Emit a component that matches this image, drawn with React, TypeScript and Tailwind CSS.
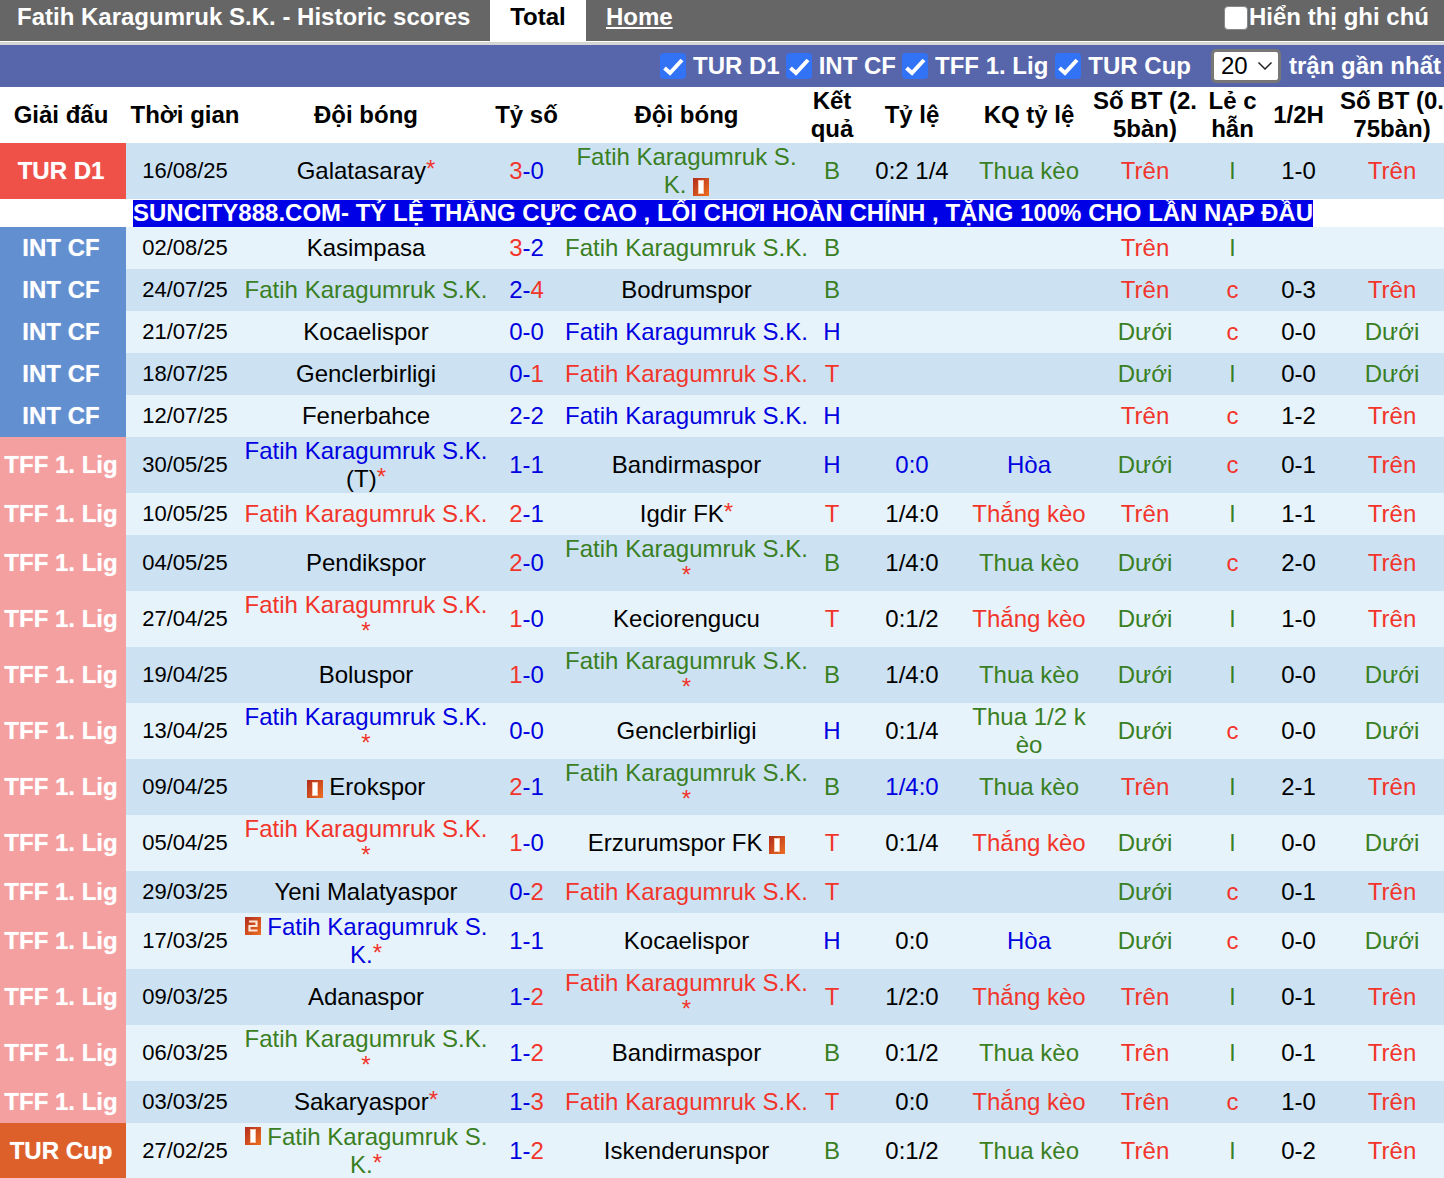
type Tone = "k" | "g" | "r" | "b";
type IconKind = "one" | "two";

interface Team {
  name: string;
  tone: Tone;
  before?: IconKind;
  after?: IconKind;
  lift?: boolean;
  tag?: string;
}

interface Row {
  league: "TUR D1" | "INT CF" | "TFF 1. Lig" | "TUR Cup";
  date: string;
  home: Team;
  score: [string, Tone, string, Tone];
  away: Team;
  result: string;
  odds?: string;
  oddsBlue?: boolean;
  oddsResult?: string;
  goals: string;
  oddEven: string;
  half?: string;
  goalsHalf?: string;
  tall?: boolean;
}

const toneClass: Record<Tone, string> = {
  k: "text-black",
  g: "text-[#3a7f23]",
  r: "text-[#f2352b]",
  b: "text-[#0000e0]",
};

const leagueClass = {
  "TUR D1": "bg-[#ef5047]",
  "INT CF": "bg-[#618fd0]",
  "TFF 1. Lig": "bg-[#f4a0a0]",
  "TUR Cup": "bg-[#dd5f2a]",
};

const FK = "Fatih Karagumruk S.K.";
const team = (name: string, tone: Tone = "k", extra: Partial<Team> = {}): Team => ({ name, tone, ...extra });

const rows: Row[] = [
  { league: "TUR D1", date: "16/08/25", home: team("Galatasaray*"), score: ["3", "r", "0", "b"], away: team("Fatih Karagumruk S.\nK. ", "g", { after: "one" }), result: "B", odds: "0:2 1/4", oddsResult: "Thua kèo", goals: "Trên", oddEven: "l", half: "1-0", goalsHalf: "Trên", tall: true },
  { league: "INT CF", date: "02/08/25", home: team("Kasimpasa"), score: ["3", "r", "2", "b"], away: team(FK, "g"), result: "B", goals: "Trên", oddEven: "l" },
  { league: "INT CF", date: "24/07/25", home: team(FK, "g"), score: ["2", "b", "4", "r"], away: team("Bodrumspor"), result: "B", goals: "Trên", oddEven: "c", half: "0-3", goalsHalf: "Trên" },
  { league: "INT CF", date: "21/07/25", home: team("Kocaelispor"), score: ["0", "b", "0", "b"], away: team(FK, "b"), result: "H", goals: "Dưới", oddEven: "c", half: "0-0", goalsHalf: "Dưới" },
  { league: "INT CF", date: "18/07/25", home: team("Genclerbirligi"), score: ["0", "b", "1", "r"], away: team(FK, "r"), result: "T", goals: "Dưới", oddEven: "l", half: "0-0", goalsHalf: "Dưới" },
  { league: "INT CF", date: "12/07/25", home: team("Fenerbahce"), score: ["2", "b", "2", "b"], away: team(FK, "b"), result: "H", goals: "Trên", oddEven: "c", half: "1-2", goalsHalf: "Trên" },
  { league: "TFF 1. Lig", date: "30/05/25", home: team(FK + "\n", "b", { tag: "(T)" }), score: ["1", "b", "1", "b"], away: team("Bandirmaspor"), result: "H", odds: "0:0", oddsBlue: true, oddsResult: "Hòa", goals: "Dưới", oddEven: "c", half: "0-1", goalsHalf: "Trên", tall: true },
  { league: "TFF 1. Lig", date: "10/05/25", home: team(FK, "r"), score: ["2", "r", "1", "b"], away: team("Igdir FK*"), result: "T", odds: "1/4:0", oddsResult: "Thắng kèo", goals: "Trên", oddEven: "l", half: "1-1", goalsHalf: "Trên" },
  { league: "TFF 1. Lig", date: "04/05/25", home: team("Pendikspor"), score: ["2", "r", "0", "b"], away: team(FK + "\n*", "g"), result: "B", odds: "1/4:0", oddsResult: "Thua kèo", goals: "Dưới", oddEven: "c", half: "2-0", goalsHalf: "Trên", tall: true },
  { league: "TFF 1. Lig", date: "27/04/25", home: team(FK + "\n*", "r"), score: ["1", "r", "0", "b"], away: team("Keciorengucu"), result: "T", odds: "0:1/2", oddsResult: "Thắng kèo", goals: "Dưới", oddEven: "l", half: "1-0", goalsHalf: "Trên", tall: true },
  { league: "TFF 1. Lig", date: "19/04/25", home: team("Boluspor"), score: ["1", "r", "0", "b"], away: team(FK + "\n*", "g"), result: "B", odds: "1/4:0", oddsResult: "Thua kèo", goals: "Dưới", oddEven: "l", half: "0-0", goalsHalf: "Dưới", tall: true },
  { league: "TFF 1. Lig", date: "13/04/25", home: team(FK + "\n*", "b"), score: ["0", "b", "0", "b"], away: team("Genclerbirligi"), result: "H", odds: "0:1/4", oddsResult: "Thua 1/2 k\nèo", goals: "Dưới", oddEven: "c", half: "0-0", goalsHalf: "Dưới", tall: true },
  { league: "TFF 1. Lig", date: "09/04/25", home: team("Erokspor", "k", { before: "one" }), score: ["2", "r", "1", "b"], away: team(FK + "\n*", "g"), result: "B", odds: "1/4:0", oddsBlue: true, oddsResult: "Thua kèo", goals: "Trên", oddEven: "l", half: "2-1", goalsHalf: "Trên", tall: true },
  { league: "TFF 1. Lig", date: "05/04/25", home: team(FK + "\n*", "r"), score: ["1", "r", "0", "b"], away: team("Erzurumspor FK ", "k", { after: "one" }), result: "T", odds: "0:1/4", oddsResult: "Thắng kèo", goals: "Dưới", oddEven: "l", half: "0-0", goalsHalf: "Dưới", tall: true },
  { league: "TFF 1. Lig", date: "29/03/25", home: team("Yeni Malatyaspor"), score: ["0", "b", "2", "r"], away: team(FK, "r"), result: "T", goals: "Dưới", oddEven: "c", half: "0-1", goalsHalf: "Trên" },
  { league: "TFF 1. Lig", date: "17/03/25", home: team("Fatih Karagumruk S.\nK.*", "b", { before: "two", lift: true }), score: ["1", "b", "1", "b"], away: team("Kocaelispor"), result: "H", odds: "0:0", oddsResult: "Hòa", goals: "Dưới", oddEven: "c", half: "0-0", goalsHalf: "Dưới", tall: true },
  { league: "TFF 1. Lig", date: "09/03/25", home: team("Adanaspor"), score: ["1", "b", "2", "r"], away: team(FK + "\n*", "r"), result: "T", odds: "1/2:0", oddsResult: "Thắng kèo", goals: "Trên", oddEven: "l", half: "0-1", goalsHalf: "Trên", tall: true },
  { league: "TFF 1. Lig", date: "06/03/25", home: team(FK + "\n*", "g"), score: ["1", "b", "2", "r"], away: team("Bandirmaspor"), result: "B", odds: "0:1/2", oddsResult: "Thua kèo", goals: "Trên", oddEven: "l", half: "0-1", goalsHalf: "Trên", tall: true },
  { league: "TFF 1. Lig", date: "03/03/25", home: team("Sakaryaspor*"), score: ["1", "b", "3", "r"], away: team(FK, "r"), result: "T", odds: "0:0", oddsResult: "Thắng kèo", goals: "Trên", oddEven: "c", half: "1-0", goalsHalf: "Trên" },
  { league: "TUR Cup", date: "27/02/25", home: team("Fatih Karagumruk S.\nK.*", "g", { before: "one", lift: true }), score: ["1", "b", "2", "r"], away: team("Iskenderunspor"), result: "B", odds: "0:1/2", oddsResult: "Thua kèo", goals: "Trên", oddEven: "l", half: "0-2", goalsHalf: "Trên", tall: true },
];

const headers = ["Giải đấu", "Thời gian", "Đội bóng", "Tỷ số", "Đội bóng", "Kết\nquả", "Tỷ lệ", "KQ tỷ lệ", "Số BT (2.\n5bàn)", "Lẻ c\nhẫn", "1/2H", "Số BT (0.\n75bàn)"];
const widths = ["w-[126px]", "w-[118px]", "w-[244px]", "w-[77px]", "w-[243px]", "w-[48px]", "w-[112px]", "w-[122px]", "w-[110px]", "w-[65px]", "w-[67px]", "w-[120px]"];

function CardIcon({ kind, lift }: { kind: IconKind; lift?: boolean }) {
  const id = `card-${kind}`;
  return (
    <svg viewBox="0 0 16 18" className={`inline-block h-[18px] w-4 ${lift ? "-translate-y-[3px]" : ""}`}>
      <defs>
        <linearGradient id={id} x1="0" y1="0" x2="1" y2="1">
          <stop offset="0" stopColor="#b02c1e" />
          <stop offset="1" stopColor="#ee6f20" />
        </linearGradient>
      </defs>
      <rect width="16" height="18" fill={`url(#${id})`} />
      {kind === "one" ? (
        <>
          <rect x="5" y="2" width="6" height="14" fill="#f7c4a8" />
          <rect x="6" y="3" width="4" height="12" fill="#fff" />
        </>
      ) : (
        <path d="M4 4.5h7.5v4.5h-7v4.5h8" fill="none" stroke="#fbe6d8" strokeWidth="2.2" />
      )}
    </svg>
  );
}

function Star() {
  return <span className="relative -top-0.5 text-[#f2352b]">*</span>;
}

function Stars({ text }: { text: string }) {
  const parts = text.split("*");
  return (
    <>
      {parts.map((part, i) => (
        <span key={i}>
          {part}
          {i < parts.length - 1 ? <Star /> : null}
        </span>
      ))}
    </>
  );
}

function TeamCell({ team }: { team: Team }) {
  return (
    <td className={`whitespace-pre-line p-0 text-center ${toneClass[team.tone]}`}>
      {team.before ? (
        <>
          <CardIcon kind={team.before} lift={team.lift} />{" "}
        </>
      ) : null}
      <Stars text={team.name} />
      {team.tag ? (
        <>
          <span className="text-black">{team.tag}</span>
          <Star />
        </>
      ) : null}
      {team.after ? <CardIcon kind={team.after} /> : null}
    </td>
  );
}

function CheckBox() {
  return (
    <span className="flex size-[26px] items-center justify-center rounded-[4px] bg-[#3273f6]">
      <svg viewBox="0 0 26 26" className="size-[26px]">
        <path d="M4.5 15l5.5 5L22 7" fill="none" stroke="#fff" strokeWidth="4" />
      </svg>
    </span>
  );
}

function FilterItem({ label, className }: { label: string; className?: string }) {
  return (
    <span className={`flex items-center gap-[7px] ${className ?? ""}`}>
      <CheckBox />
      <span>{label}</span>
    </span>
  );
}

function MatchRow({ row, index }: { row: Row; index: number }) {
  const bg = index % 2 === 0 ? "bg-[#cce2f3]" : "bg-[#e7f3fa]";
  const resultTone: Tone = row.result === "B" ? "g" : row.result === "T" ? "r" : "b";
  const oddsTone: Tone | undefined = row.oddsResult?.startsWith("Thua") ? "g" : row.oddsResult === "Hòa" ? "b" : "r";
  const goalsTone = (v?: string): Tone => (v === "Trên" ? "r" : "g");

  return (
    <tr className={`${bg} ${row.tall ? "h-14" : "h-[42px]"}`}>
      <td className={`p-0 pr-1 text-center font-bold text-white [text-shadow:0_0_1px_rgba(255,255,255,0.6)] ${leagueClass[row.league]}`}>{row.league}</td>
      <td className="p-0 text-center text-[22px]">{row.date}</td>
      <TeamCell team={row.home} />
      <td className="p-0 text-center">
        <span className={toneClass[row.score[1]]}>{row.score[0]}</span>
        <span className={toneClass.b}>-</span>
        <span className={toneClass[row.score[3]]}>{row.score[2]}</span>
      </td>
      <TeamCell team={row.away} />
      <td className={`p-0 text-center ${toneClass[resultTone]}`}>{row.result}</td>
      <td className={`p-0 text-center ${row.oddsBlue ? toneClass.b : ""}`}>{row.odds}</td>
      <td className={`whitespace-pre-line p-0 text-center ${oddsTone ? toneClass[oddsTone] : ""}`}>{row.oddsResult}</td>
      <td className={`p-0 text-center ${toneClass[goalsTone(row.goals)]}`}>{row.goals}</td>
      <td className={`p-0 text-center ${row.oddEven === "c" ? toneClass.r : toneClass.g}`}>{row.oddEven}</td>
      <td className="p-0 text-center">{row.half}</td>
      <td className={`p-0 text-center ${toneClass[goalsTone(row.goalsHalf)]}`}>{row.goalsHalf}</td>
    </tr>
  );
}

export default function App() {
  return (
    <div className="h-[1178px] w-[1444px] overflow-hidden bg-white font-['Liberation_Sans',Arial,sans-serif] text-2xl leading-7 text-black">
      <div className="flex h-[41px] items-start bg-[#666666] font-bold text-white">
        <span className="ml-[17px] mt-[3px] w-[473px]">Fatih Karagumruk S.K. - Historic scores</span>
        <span className="flex h-[41px] w-24 justify-center bg-white pt-[3px] text-black">Total</span>
        <span className="ml-5 mt-[3px] underline">Home</span>
        <span className="ml-auto mr-[15px] mt-[3px] flex items-center">
          <span className="mt-[2px] h-6 w-6 rounded-[4px] border border-[#888888] bg-white" />
          <span className="ml-px">Hiển thị ghi chú</span>
        </span>
      </div>
      <div className="h-1 border-t border-white bg-[#d6d6d6]" />
      <div className="flex h-[42px] items-center justify-end bg-[#5766ab] pr-[3px] font-bold text-white">
        <FilterItem label="TUR D1" />
        <FilterItem label="INT CF" className="ml-[6px]" />
        <FilterItem label="TFF 1. Lig" className="ml-[6px]" />
        <FilterItem label="TUR Cup" className="ml-[7px]" />
        <span className="ml-5 flex h-[34px] w-[70px] items-center justify-between rounded-[5px] border-[3px] border-[#777777] bg-white pl-[7px] pr-[5px] font-normal text-black">
          20
          <svg viewBox="0 0 16 10" className="h-[10px] w-4">
            <path d="M1.5 1.5L8 8l6.5-6.5" fill="none" stroke="#222" strokeWidth="1.5" />
          </svg>
        </span>
        <span className="ml-2">trận gần nhất</span>
      </div>
      <table className="w-[1452px] max-w-none table-fixed border-collapse">
        <colgroup>
          {widths.map((w, i) => (
            <col key={i} className={w} />
          ))}
        </colgroup>
        <thead>
          <tr className="h-14">
            {headers.map((h, i) => (
              <th key={i} className={`whitespace-pre-line p-0 text-center font-bold ${i === 0 ? "pr-1" : ""}`}>
                {h}
              </th>
            ))}
          </tr>
        </thead>
        <tbody>
          {rows.slice(0, 1).map((row) => (
            <MatchRow key={row.date} row={row} index={0} />
          ))}
          <tr className="h-7 bg-white">
            <td colSpan={12} className="p-0">
              <div className="ml-[133px] h-[27px] w-[1180px] overflow-hidden whitespace-nowrap bg-[#0000e6] text-center font-bold leading-[26px] text-white">
                SUNCITY888.COM- TỶ LỆ THẮNG CỰC CAO , LỐI CHƠI HOÀN CHỈNH , TẶNG 100% CHO LẦN NẠP ĐẦU
              </div>
            </td>
          </tr>
          {rows.slice(1).map((row, i) => (
            <MatchRow key={row.date} row={row} index={i + 1} />
          ))}
        </tbody>
      </table>
    </div>
  );
}
